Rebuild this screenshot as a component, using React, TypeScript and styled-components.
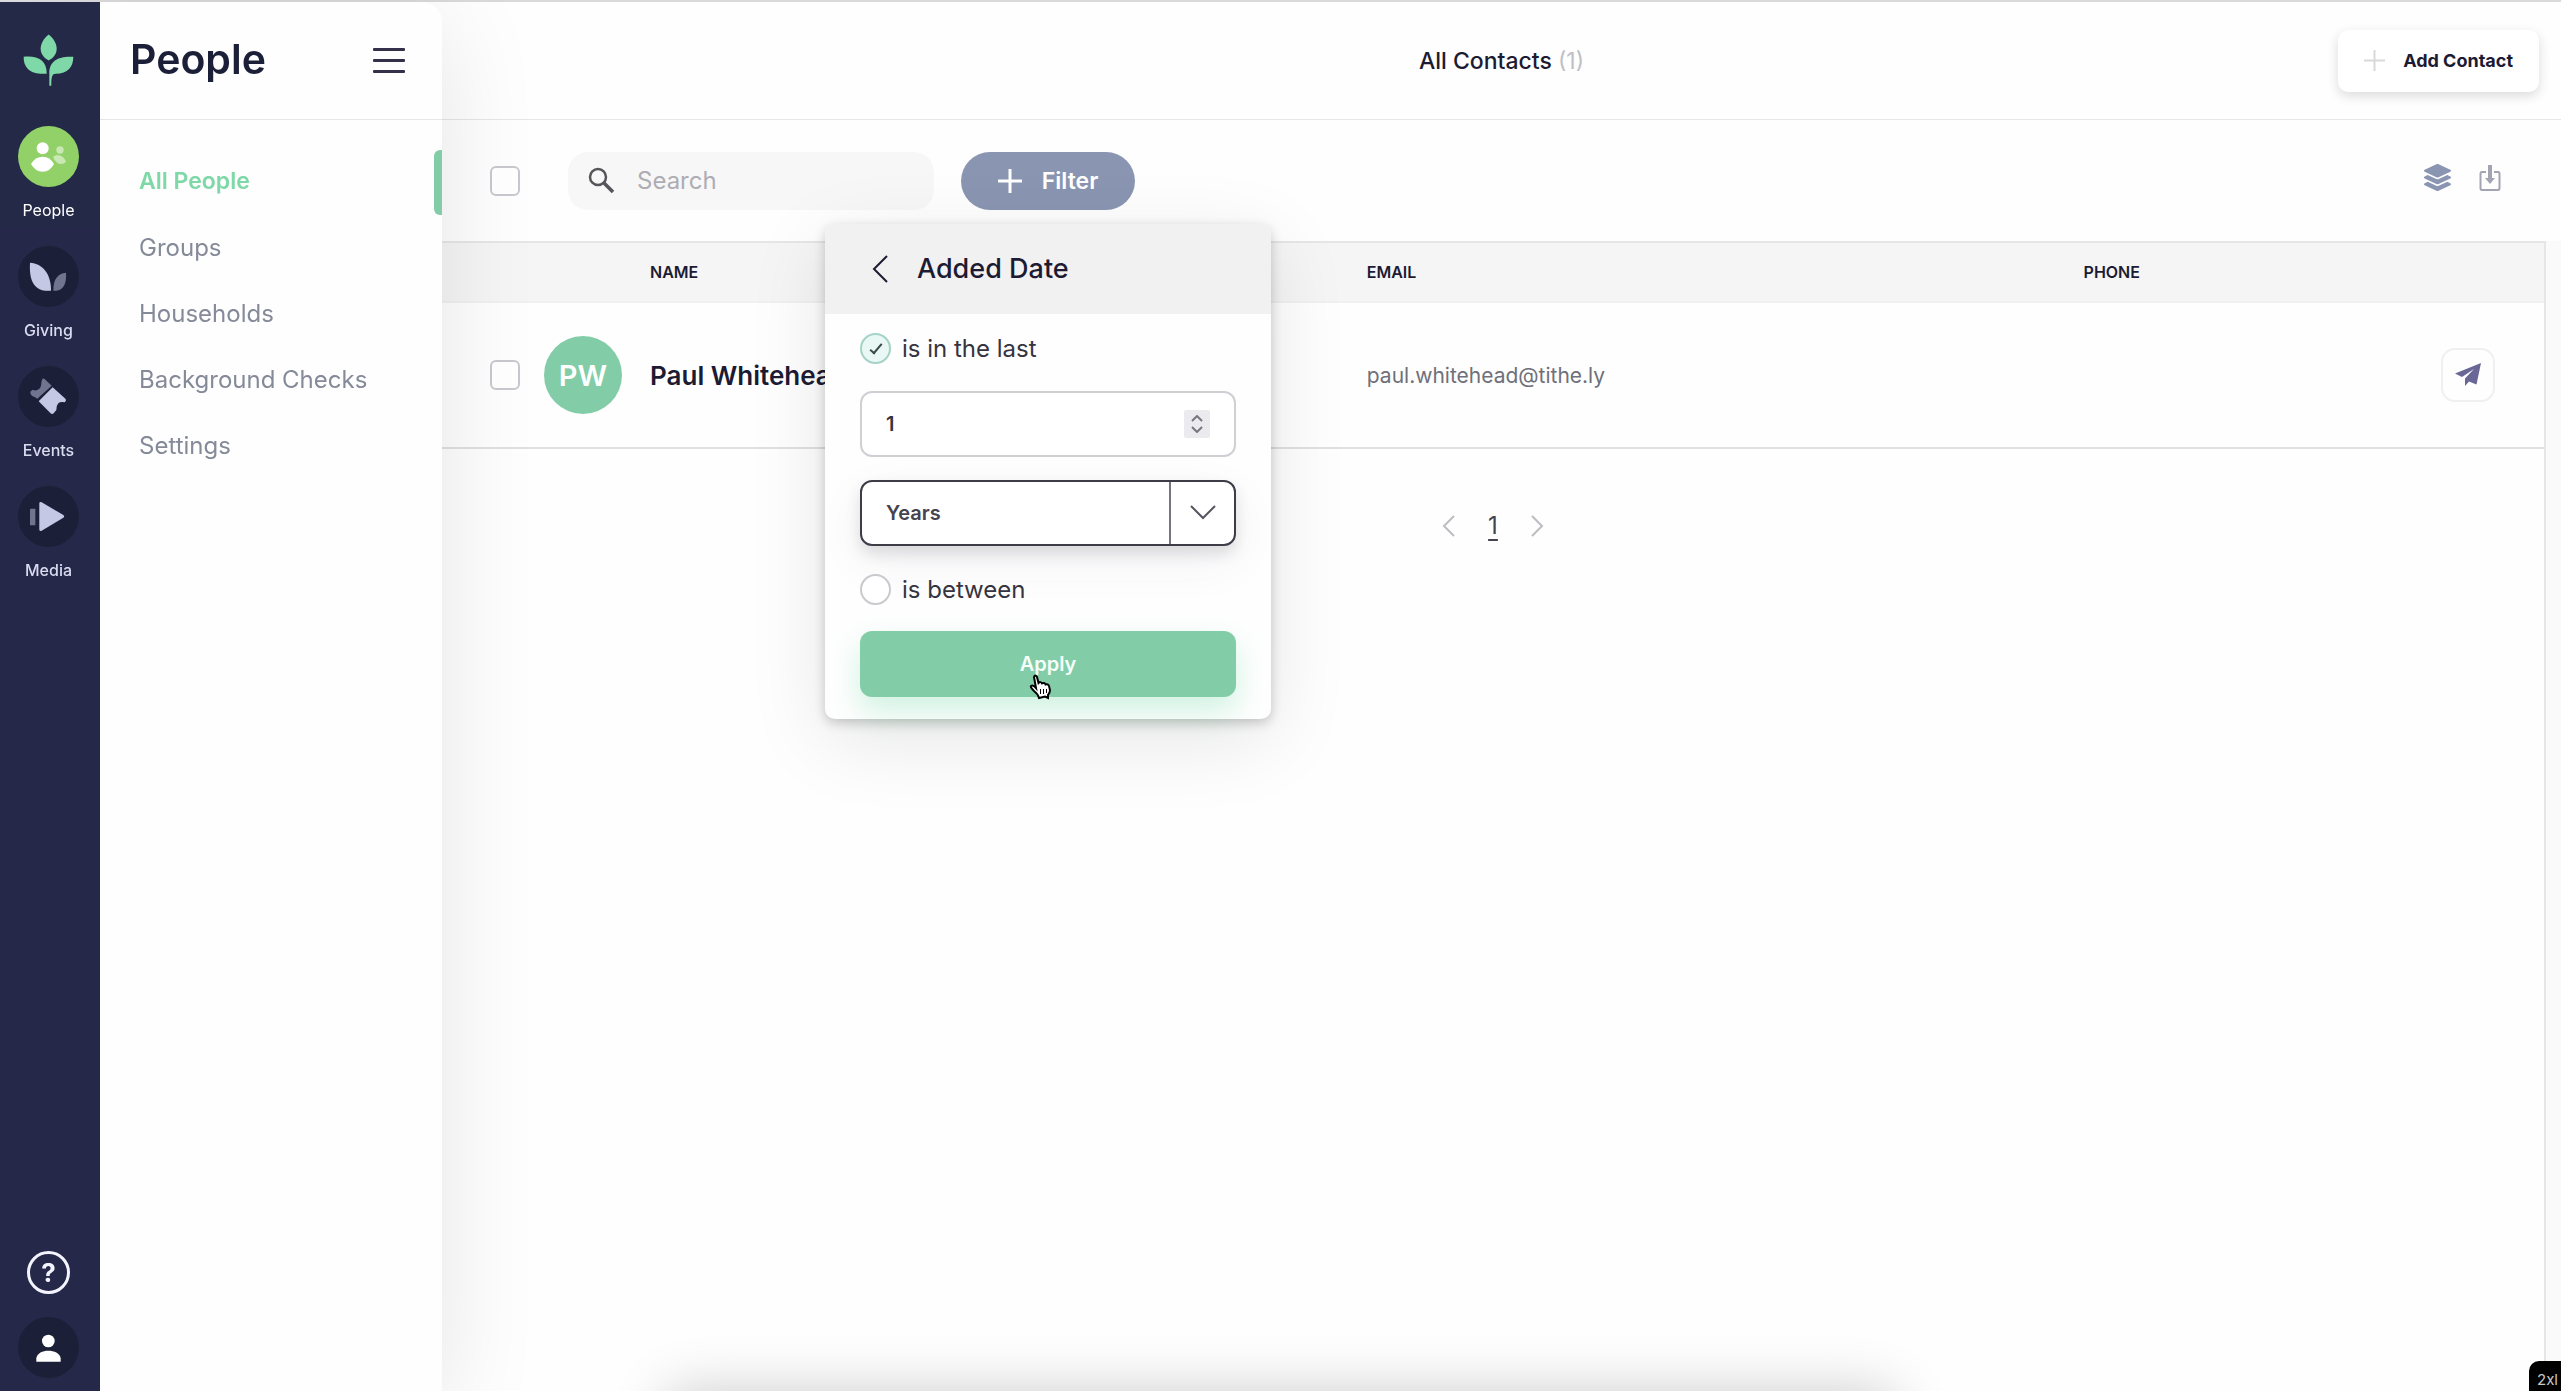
import React from 'react';
import styled, { createGlobalStyle } from 'styled-components';
import { FaLayerGroup } from 'react-icons/fa';

const color = {
  ink: '#1c1b33',
  navy: '#1b2038',
  muted: '#858a99',
  green: '#82cda8',
  mint: '#7fd8a8',
  line: '#e6e6e8',
  page: '#fefefe',
};

const GlobalStyle = createGlobalStyle`
  *, *::before, *::after { box-sizing: border-box; }
  body {
    margin: 0;
    overflow: hidden;
    background: ${color.page};
    color: ${color.ink};
    font-family: Inter, "Liberation Sans", sans-serif;
    font-size: 24px;
  }
  button, input, select { font-family: inherit; color: inherit; margin: 0; }
  button { border: 0; padding: 0; background: none; cursor: pointer; }
  a { color: inherit; text-decoration: none; }
  svg { display: block; }
`;

const Page = styled.div`
  display: grid;
  grid-template-columns: 100px 342px minmax(0, 1fr);
  min-height: 100vh;
  border-top: 2px solid #d9d9db;
`;

/* ---------- navigation rail ---------- */

const Rail = styled.nav`
  display: flex;
  flex-direction: column;
  align-items: center;
  padding: 32px 3px 13px 0;
  z-index: 3;
  background: linear-gradient(#232946 225px, #262849 225px);
`;

const Logo = styled.a`
  margin-bottom: 40px;
`;

const RailItems = styled.div`
  display: grid;
  gap: 25px;
`;

const RailLink = styled.a<{ $active?: boolean }>`
  display: grid;
  justify-items: center;
  gap: 12px;
  font-size: 16px;
  font-weight: ${p => (p.$active ? 400 : 500)};
  line-height: 22px;
  color: ${p => (p.$active ? '#ffffff' : '#d9dbef')};
`;

const Disc = styled.span<{ $fill: string }>`
  display: block;
  width: 61px;
  height: 61px;
  border-radius: 50%;
  background: ${p => p.$fill};
`;

const RailFoot = styled.div`
  display: grid;
  justify-items: center;
  gap: 23px;
  margin-top: auto;
`;

const HelpButton = styled.button`
  width: 43px;
  height: 43px;
  border: 3px solid #f3f4ff;
  border-radius: 50%;
  color: #f3f4ff;
  font-size: 26px;
  font-weight: 700;
  line-height: 36px;
`;

/* ---------- people sidebar ---------- */

const Sidebar = styled.aside`
  z-index: 2;
  border-top-right-radius: 20px;
  background: ${color.page};
  box-shadow: 0 20px 100px rgba(0, 0, 0, 0.1);
`;

const SidebarHead = styled.div`
  display: flex;
  align-items: center;
  justify-content: space-between;
  height: 118px;
  padding: 0 37px 0 30px;
  border-bottom: 1px solid ${color.line};
`;

const SidebarTitle = styled.h1`
  margin: 0;
  padding-bottom: 3px;
  font-size: 41px;
  font-weight: 600;
  line-height: 52px;
  color: ${color.navy};
`;

const MenuButton = styled.button`
  display: grid;
  gap: 8px;
  width: 32px;

  span {
    height: 3px;
    border-radius: 1px;
    background: #35304a;
  }
`;

const Menu = styled.ul`
  margin: 0;
  padding: 28px 0 0;
  list-style: none;
`;

const MenuLink = styled.a<{ $active?: boolean }>`
  display: flex;
  align-items: center;
  height: 66px;
  padding-left: 39px;
  font-size: ${p => (p.$active ? 23 : 24)}px;
  font-weight: ${p => (p.$active ? 600 : 400)};
  color: ${p => (p.$active ? color.mint : color.muted)};
`;

const MenuItem = styled.li<{ $active?: boolean }>`
  position: relative;

  &::after {
    content: '';
    display: ${p => (p.$active ? 'block' : 'none')};
    position: absolute;
    top: 2px;
    right: 0;
    width: 8px;
    height: 65px;
    border-radius: 6px 0 0 6px;
    background: ${color.green};
  }
`;

/* ---------- main area ---------- */

const Main = styled.main`
  display: flex;
  flex-direction: column;
`;

const Header = styled.header`
  display: grid;
  grid-template-columns: 1fr auto 1fr;
  align-items: center;
  height: 118px;
  padding: 0 22px;
  border-bottom: 1px solid ${color.line};
`;

const Title = styled.h2`
  grid-column: 2;
  margin: 0;
  font-size: 23px;
  font-weight: 500;
  line-height: 32px;

  span { color: #bfbfc6; font-weight: 400; }
`;

const AddButton = styled.button`
  display: flex;
  align-items: center;
  justify-self: end;
  gap: 18px;
  height: 62px;
  padding: 0 26px;
  border-radius: 10px;
  background: #ffffff;
  box-shadow: 0 4px 12px rgba(0, 0, 0, 0.14);
  font-size: 18px;
  font-weight: 700;
`;

const Toolbar = styled.div`
  display: flex;
  align-items: center;
  height: 121px;
  padding: 0 60px 0 48px;
`;

const Checkbox = styled.input`
  appearance: none;
  flex: none;
  width: 30px;
  height: 30px;
  border: 2px solid #c8c8ce;
  border-radius: 6px;
  background: #ffffff;
`;

const SearchBox = styled.label`
  display: flex;
  align-items: center;
  gap: 22px;
  width: 366px;
  height: 58px;
  margin: 0 27px 0 48px;
  padding: 0 20px;
  border-radius: 20px;
  background: #f7f7f8;
`;

const SearchInput = styled.input`
  flex: 1;
  min-width: 0;
  border: 0;
  padding: 0;
  outline: 0;
  background: none;
  font-size: 24px;

  &::placeholder { color: #adadb3; opacity: 1; }
`;

const FilterWrap = styled.div`
  position: relative;
`;

const FilterButton = styled.button`
  display: flex;
  align-items: center;
  justify-content: center;
  gap: 20px;
  width: 174px;
  height: 58px;
  border-radius: 29px;
  background: #8a95b2;
  color: #ffffff;
  font-size: 23px;
  font-weight: 600;
`;

const ToolbarActions = styled.div`
  display: flex;
  align-items: center;
  gap: 28px;
  margin-left: auto;
  padding-bottom: 6px;
  color: #8a95b2;

  button:last-child { color: #a2a3b3; }
`;

const Body = styled.div`
  flex: 1;
  padding-right: 15px;
  background: #fafafa;
`;

const Sheet = styled.div`
  height: 100%;
  border-right: 2px solid ${color.line};
  background: ${color.page};
`;

const Table = styled.table`
  width: 100%;
  table-layout: fixed;
  border-collapse: separate;
  border-spacing: 0;
  text-align: left;
`;

const SelectCol = styled.col`
  width: 208px;
`;

const WideCol = styled.col`
  width: 34.1%;
`;

const ActionCol = styled.col`
  width: 120px;
`;

const HeadCell = styled.th`
  height: 62px;
  padding: 0;
  border-top: 2px solid ${color.line};
  border-bottom: 2px solid #f0f0f1;
  background: #f5f5f5;
  font-size: 16px;
  font-weight: 600;
`;

const Cell = styled.td`
  height: 146px;
  padding: 0;
  border-bottom: 2px solid #e0e0e2;
  font-size: 21px;
  color: #6f7079;
`;

const SelectGroup = styled.div`
  display: flex;
  align-items: center;
  gap: 24px;
  padding-left: 48px;
`;

const Avatar = styled.span`
  display: grid;
  place-items: center;
  width: 78px;
  height: 78px;
  border-radius: 50%;
  background: ${color.green};
  color: #ffffff;
  font-size: 29px;
  font-weight: 600;
`;

const NameLink = styled.a`
  color: ${color.ink};
  font-size: 26px;
  font-weight: 600;
`;

const SendButton = styled.button`
  display: grid;
  place-items: center;
  width: 54px;
  height: 54px;
  margin: 0 49px 0 auto;
  border: 2px solid #f0f0f2;
  border-radius: 14px;
`;

const Pager = styled.div`
  display: flex;
  align-items: center;
  justify-content: center;
  gap: 33px;
  padding-top: 61px;
  color: #bcbcc2;

  a {
    color: #44434f;
    line-height: 32px;
    text-decoration: underline;
    text-decoration-thickness: 2px;
    text-underline-offset: 5px;
  }
`;

/* ---------- filter popover ---------- */

const Popover = styled.form`
  position: absolute;
  top: calc(100% + 14px);
  left: 50%;
  z-index: 1;
  width: 446px;
  transform: translateX(-50%);
  border-radius: 10px;
  background: ${color.page};
  box-shadow: 0 4px 12px rgba(0, 0, 0, 0.2), 0 20px 80px rgba(0, 0, 0, 0.1);
`;

const PopoverHead = styled.div`
  display: flex;
  align-items: center;
  gap: 28px;
  height: 90px;
  padding: 0 47px;
  border-radius: 10px 10px 0 0;
  background: #f1f1f1;
  font-size: 27px;
  font-weight: 500;
`;

const PopoverBody = styled.div`
  display: grid;
  padding: 19px 35px 22px;
`;

const RadioRow = styled.label`
  display: flex;
  align-items: center;
  gap: 11px;
  height: 32px;
  font-size: 24px;
  color: #35343f;
`;

const Radio = styled.input`
  appearance: none;
  display: grid;
  place-items: center;
  flex: none;
  width: 31px;
  height: 31px;
  border: 2px solid #c9c9ce;
  border-radius: 50%;
  background: #ffffff;

  &:checked {
    border-color: #a3d3c6;
    background: #eaf8f5;
  }

  &:checked::after {
    content: '';
    width: 6px;
    height: 13px;
    margin-bottom: 3px;
    border: solid #3c4a4a;
    border-width: 0 2px 2px 0;
    transform: rotate(40deg);
  }
`;

const Field = styled.div`
  position: relative;
  margin: 26px 0 23px;
`;

const NumberInput = styled.input`
  display: block;
  appearance: textfield;
  width: 100%;
  height: 66px;
  padding: 0 60px 0 24px;
  border: 2px solid #cfcfd4;
  border-radius: 12px;
  outline: 0;
  background: #ffffff;
  font-size: 20px;
  font-weight: 600;
  color: #35343f;

  &::-webkit-inner-spin-button { display: none; }
`;

const Stepper = styled.div`
  position: absolute;
  top: 19px;
  right: 26px;
  display: grid;
  width: 26px;
  height: 28px;
  padding: 3px 0;
  border-radius: 2px;
  background: #ebebef;
  color: #77767f;

  button { display: grid; place-items: center; }
`;

const SelectField = styled.div`
  display: grid;
  height: 66px;
  margin-bottom: 28px;
  border: 2px solid #3d3c47;
  border-radius: 12px;
  background: #ffffff;
  box-shadow: 0 8px 16px rgba(0, 0, 0, 0.12), 0 16px 50px rgba(60, 60, 120, 0.06);
`;

const Select = styled.select`
  grid-area: 1 / 1;
  appearance: none;
  border: 0;
  padding: 0 80px 0 24px;
  outline: 0;
  background: none;
  font-size: 20px;
  font-weight: 600;
  color: #44434f;
`;

const SelectArrow = styled.span`
  grid-area: 1 / 1;
  justify-self: end;
  display: grid;
  place-items: center;
  width: 65px;
  border-left: 2px solid #77767f;
  color: #55545f;
  pointer-events: none;
`;

const ApplyButton = styled.button`
  position: relative;
  height: 66px;
  margin-top: 25px;
  border-radius: 12px;
  background: ${color.green};
  box-shadow: 0 14px 30px rgba(100, 215, 160, 0.3);
  color: #f7fffa;
  font-size: 20px;
  font-weight: 600;
`;

const Pointer = styled.svg`
  position: absolute;
  top: 43px;
  left: 45%;
`;

/* ---------- window overlays ---------- */

const BottomShade = styled.div`
  position: fixed;
  top: 100%;
  left: 26%;
  right: 26%;
  height: 100px;
  border-radius: 12px;
  box-shadow: 0 0 56px rgba(0, 0, 0, 0.2);
`;

const SizeTag = styled.div`
  position: fixed;
  right: 0;
  bottom: 0;
  z-index: 4;
  height: 30px;
  padding: 0 3px 0 8px;
  border-top-left-radius: 10px;
  background: #000000;
  color: #c9c9c9;
  font-size: 15px;
  line-height: 38px;
`;

/* ---------- drawings ---------- */

const LeafLogo = () => (
  <svg width="51" height="52" viewBox="0 0 153 155" fill={color.mint}>
    <path d="M77 1C60 15 53 30 53 44s8 27 24 35c16-8 24-21 24-35S94 15 77 1Z" />
    <path d="M2 68C44 64 72 78 71 119H52C18 117 1 98 2 68Z" />
    <path d="M151 68C110 65 78 78 79 118V155H85C85 128 87 119 98 119C135 119 151 98 151 68Z" />
  </svg>
);

const PeopleIcon = () => (
  <svg width="61" height="61" viewBox="0 0 183 183" fill="#fff">
    <circle cx="74" cy="67" r="18" />
    <path d="M39 114Q52 92 74 92T108 114Q96 137 74 137T39 114Z" />
    <g opacity="0.5">
      <circle cx="126" cy="72" r="11" />
      <path d="M105 92Q112 87 120 87Q137 89 144 107Q139 114 128 114Q113 112 105 92Z" />
    </g>
  </svg>
);

const GivingIcon = () => (
  <svg width="61" height="61" viewBox="0 0 183 183" fill="#c5c8e4">
    <path d="M36 50C74 53 99 82 99 134H82C48 130 33 104 36 50Z" />
    <path opacity="0.5" d="M144 80C119 82 106 99 106 134H114C137 132 146 112 144 80Z" />
  </svg>
);

const EventsIcon = () => (
  <svg width="61" height="61" viewBox="0 0 183 183" fill="#c5c8e4">
    <path d="M104 64L143 99Q146 104 140 109Q127 106 121 112T115 132L107 142Q102 146 97 141L62 106Z" />
    <path opacity="0.5" d="M79 38L101 59L58 98L50 93Q36 88 37 77L44 71Q54 76 62 70T70 50L72 41Q75 36 79 38Z" />
  </svg>
);

const MediaIcon = () => (
  <svg width="61" height="61" viewBox="0 0 183 183" fill="#c5c8e4">
    <path d="M64 51Q65 46 71 49L136 87Q141 91 136 95L71 134Q65 137 64 131Z" />
    <rect x="36" y="68" width="16" height="50" rx="2" opacity="0.5" />
  </svg>
);

const ProfileIcon = () => (
  <svg width="61" height="61" viewBox="0 0 183 183" fill="#fff">
    <circle cx="91" cy="72" r="19" />
    <path d="M55 134V124C57 108 74 101 91 101S126 108 128 124V134Z" />
  </svg>
);

const SearchIcon = () => (
  <svg width="27" height="27" viewBox="0 0 27 27" fill="none" stroke="#55555a" strokeWidth="2.500">
    <circle cx="10" cy="10" r="8" />
    <path d="M15.500 15.500L25 25" strokeWidth="3.500" />
  </svg>
);

const PlusIcon = ({ size, width }: { size: number; width: number }) => (
  <svg width={size} height={size} viewBox="0 0 24 24" fill="none" stroke="currentColor" strokeWidth={width}>
    <path d="M12 0V24M0 12H24" />
  </svg>
);

const DownloadIcon = () => (
  <svg width="22" height="28" viewBox="0 0 22 28" fill="none" stroke="currentColor" strokeWidth="2">
    <path d="M7 8H3Q1.500 8 1.500 10V24Q1.500 26 3 26H19Q20.500 26 20.500 24V10Q20.500 8 19 8H15" />
    <path d="M11 1V15" strokeWidth="4" />
    <path d="M6 14H16L11 20Z" fill="currentColor" stroke="none" />
  </svg>
);

const SendIcon = () => (
  <svg width="26" height="24" viewBox="0 0 26 24" fill="#6a6796">
    <path d="M26 0L0 10.500L7 14L19 6L10 15.500V23L14 18.500L21.500 21.500Z" />
  </svg>
);

type ChevronProps = { d: string; w: number; h: number; stroke?: number };
const Chevron = ({ d, w, h, stroke = 2 }: ChevronProps) => (
  <svg width={w} height={h} viewBox={`0 0 ${w} ${h}`} fill="none" stroke="currentColor" strokeWidth={stroke}>
    <path d={d} />
  </svg>
);

const HandPointer = () => (
  <Pointer width="23" height="26" viewBox="0 0 23 26" fill="#fff" stroke="#000" strokeWidth="2">
    <path d="M5 3Q6 0 8 3L9.500 9Q11.500 7 13 9.500Q15.500 8 16.500 10.500Q19 9.500 20 12L21 16Q21 19 19 21V24L16 22.500L10 24Q9 20 5 17Q1 13 2 12Q4 10.500 7 14Z" />
    <path d="M11.500 15V20M14.500 15V20M17.500 15V19" strokeWidth="1" />
  </Pointer>
);

const railItems = [
  { label: 'People', fill: '#92d168', Icon: PeopleIcon, active: true },
  { label: 'Giving', fill: color.navy, Icon: GivingIcon },
  { label: 'Events', fill: color.navy, Icon: EventsIcon },
  { label: 'Media', fill: color.navy, Icon: MediaIcon },
];

const menuItems = ['All People', 'Groups', 'Households', 'Background Checks', 'Settings'];

const AddedDateFilter = () => (
  <Popover onSubmit={e => e.preventDefault()}>
    <PopoverHead>
      <button type="button" aria-label="Back">
        <Chevron w={17} h={28} d="M15 1L2 14L15 27" />
      </button>
      Added Date
    </PopoverHead>
    <PopoverBody>
      <RadioRow>
        <Radio type="radio" name="range" defaultChecked />
        is in the last
      </RadioRow>
      <Field>
        <NumberInput type="number" defaultValue={1} aria-label="Amount" />
        <Stepper>
          <button type="button" aria-label="Increase">
            <Chevron w={12} h={7} d="M1 6L6 1L11 6" />
          </button>
          <button type="button" aria-label="Decrease">
            <Chevron w={12} h={7} d="M1 1L6 6L11 1" />
          </button>
        </Stepper>
      </Field>
      <SelectField>
        <Select aria-label="Unit" defaultValue="Years">
          <option>Days</option>
          <option>Weeks</option>
          <option>Months</option>
          <option>Years</option>
        </Select>
        <SelectArrow>
          <Chevron w={26} h={15} d="M1 1L13 13L25 1" />
        </SelectArrow>
      </SelectField>
      <RadioRow>
        <Radio type="radio" name="range" />
        is between
      </RadioRow>
      <ApplyButton type="submit">
        Apply
        <HandPointer />
      </ApplyButton>
    </PopoverBody>
  </Popover>
);

export default function App() {
  return (
    <>
      <GlobalStyle />
      <Page>
        <Rail aria-label="Products">
          <Logo href="#" aria-label="Home">
            <LeafLogo />
          </Logo>
          <RailItems>
            {railItems.map(({ label, fill, Icon, active }) => (
              <RailLink key={label} href="#" $active={active}>
                <Disc $fill={fill}>
                  <Icon />
                </Disc>
                {label}
              </RailLink>
            ))}
          </RailItems>
          <RailFoot>
            <HelpButton aria-label="Help">?</HelpButton>
            <button aria-label="Profile">
              <Disc $fill={color.navy}>
                <ProfileIcon />
              </Disc>
            </button>
          </RailFoot>
        </Rail>

        <Sidebar>
          <SidebarHead>
            <SidebarTitle>People</SidebarTitle>
            <MenuButton aria-label="Toggle menu">
              <span />
              <span />
              <span />
            </MenuButton>
          </SidebarHead>
          <Menu>
            {menuItems.map((item, i) => (
              <MenuItem key={item} $active={i === 0}>
                <MenuLink href="#" $active={i === 0}>
                  {item}
                </MenuLink>
              </MenuItem>
            ))}
          </Menu>
        </Sidebar>

        <Main>
          <Header>
            <Title>
              All Contacts <span>(1)</span>
            </Title>
            <AddButton>
              <svg width="21" height="21" viewBox="0 0 21 21" stroke="#d9d9dc" strokeWidth="2">
                <path d="M10.500 0V21M0 10.500H21" />
              </svg>
              Add Contact
            </AddButton>
          </Header>

          <Toolbar>
            <Checkbox type="checkbox" aria-label="Select all" />
            <SearchBox>
              <SearchIcon />
              <SearchInput type="search" placeholder="Search" aria-label="Search" />
            </SearchBox>
            <FilterWrap>
              <FilterButton>
                <PlusIcon size={24} width={3} />
                Filter
              </FilterButton>
              <AddedDateFilter />
            </FilterWrap>
            <ToolbarActions>
              <button aria-label="Layers">
                <FaLayerGroup size={27} />
              </button>
              <button aria-label="Export">
                <DownloadIcon />
              </button>
            </ToolbarActions>
          </Toolbar>

          <Body>
            <Sheet>
              <Table>
                <colgroup>
                  <SelectCol />
                  <WideCol />
                  <WideCol />
                  <col />
                  <ActionCol />
                </colgroup>
                <thead>
                  <tr>
                    <HeadCell />
                    <HeadCell>NAME</HeadCell>
                    <HeadCell>EMAIL</HeadCell>
                    <HeadCell>PHONE</HeadCell>
                    <HeadCell />
                  </tr>
                </thead>
                <tbody>
                  <tr>
                    <Cell>
                      <SelectGroup>
                        <Checkbox type="checkbox" aria-label="Select Paul Whitehead" />
                        <Avatar>PW</Avatar>
                      </SelectGroup>
                    </Cell>
                    <Cell>
                      <NameLink href="#">Paul Whitehead</NameLink>
                    </Cell>
                    <Cell>paul.whitehead@tithe.ly</Cell>
                    <Cell />
                    <Cell>
                      <SendButton aria-label="Send message">
                        <SendIcon />
                      </SendButton>
                    </Cell>
                  </tr>
                </tbody>
              </Table>
              <Pager>
                <button aria-label="Previous page">
                  <Chevron w={13} h={22} d="M12 1L2 11L12 21" />
                </button>
                <a href="#">1</a>
                <button aria-label="Next page">
                  <Chevron w={13} h={22} d="M1 1L11 11L1 21" />
                </button>
              </Pager>
            </Sheet>
          </Body>
        </Main>
      </Page>
      <BottomShade />
      <SizeTag>2xl</SizeTag>
    </>
  );
}
